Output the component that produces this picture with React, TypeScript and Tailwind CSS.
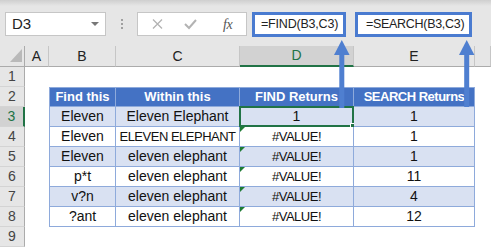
import React from "react";

type Cell = { text: string; error?: boolean; tight?: boolean };

// sheet column widths: row header, A, B, C, D, E, F
const colW = ["w-[25px]", "w-[24px]", "w-[67px]", "w-[124px]", "w-[114px]", "w-[121px]", "w-[16px]"];
const letters = ["A", "B", "C", "D", "E", "F"];

const header = ["Find this", "Within this", "FIND Returns", "SEARCH Returns"];

const val = { text: "#VALUE!", error: true, tight: true };

const rows: Cell[][] = [
  [{ text: "Eleven" }, { text: "Eleven Elephant" }, { text: "1" }, { text: "1" }],
  [{ text: "Eleven" }, { text: "ELEVEN ELEPHANT", tight: true }, val, { text: "1" }],
  [{ text: "Eleven" }, { text: "eleven elephant" }, val, { text: "1" }],
  [{ text: "p*t" }, { text: "eleven elephant" }, val, { text: "11" }],
  [{ text: "v?n" }, { text: "eleven elephant" }, val, { text: "4" }],
  [{ text: "?ant" }, { text: "eleven elephant" }, val, { text: "12" }],
];

const RowHead = ({ n, active }: { n: number; active?: boolean }) => (
  <div
    className={`${colW[0]} h-full shrink-0 flex items-center justify-center border-b border-[#d4d4d4] text-[14px] ${
      active
        ? "bg-[#d2d2d2] text-[#217346] border-r-2 border-r-[#217346]"
        : "bg-[#e6e6e6] text-[#444] border-r border-r-[#ababab]"
    }`}
  >
    {n}
  </div>
);

const FormulaBar = () => (
  <div className="h-[46px] bg-[linear-gradient(#cfcfcf,#e6e6e6_6px)] flex items-start pt-[12px] pl-[5px]">
    <div className="w-[101px] h-[24px] bg-white border border-[#c6c6c6] flex items-center justify-between pl-[6px] pr-[6px]">
      <span className="text-[15px] text-[#222]">D3</span>
      <span className="w-0 h-0 border-x-[4px] border-x-transparent border-t-[4px] border-t-[#777]" />
    </div>
    <div className="w-[31px] h-[24px] flex flex-col items-center justify-center gap-[2px]">
      <span className="w-[2px] h-[2px] bg-[#a0a0a0]" />
      <span className="w-[2px] h-[2px] bg-[#a0a0a0]" />
      <span className="w-[2px] h-[2px] bg-[#a0a0a0]" />
    </div>
    <div className="w-[110px] h-[24px] bg-white border border-[#c6c6c6] flex items-center">
      <svg width="80" height="22" viewBox="0 0 80 22" className="shrink-0">
        <path d="M15 6.5 L24 15.5 M24 6.5 L15 15.5" stroke="#b3b3b3" strokeWidth="1.3" fill="none" />
        <path d="M47 11 L51 15 L58 7" stroke="#b3b3b3" strokeWidth="2" fill="none" />
      </svg>
      <span className="ml-[5px] text-[14px] italic text-[#555] font-['Liberation_Serif'] tracking-[-0.5px]">fx</span>
    </div>
    <div className="ml-[5px] w-[94px] h-[25px] bg-white border-[3px] border-[#4a7bd0] flex items-center pl-[6px] text-[12.5px] tracking-[-0.2px] text-[#222] whitespace-nowrap">
      =FIND(B3,C3)
    </div>
    <div className="ml-[9px] w-[117px] h-[25px] bg-white border-[3px] border-[#4a7bd0] flex items-center pl-[8px] text-[12.5px] tracking-[-0.3px] text-[#222] whitespace-nowrap">
      =SEARCH(B3,C3)
    </div>
  </div>
);

const ColumnHeads = () => (
  <div className="h-[21px] flex bg-[#e6e6e6]">
    <div className={`${colW[0]} shrink-0 border-r border-b border-[#ababab] relative`}>
      <span className="absolute left-[10px] bottom-[4px] w-0 h-0 border-l-[12px] border-l-transparent border-b-[13px] border-b-[#b9b9b9]" />
    </div>
    {letters.map((l, i) => {
      const active = l === "D";
      return (
        <div
          key={l}
          className={`${colW[i + 1]} shrink-0 flex items-center justify-center text-[14px] border-r border-r-[#c6c6c6] ${
            active
              ? "bg-[#d2d2d2] text-[#217346] border-b-2 border-b-[#217346]"
              : "text-[#222] border-b border-b-[#ababab]"
          }`}
        >
          {l === "F" ? "" : l}
        </div>
      );
    })}
  </div>
);

const EmptyRow = ({ n }: { n: number }) => (
  <div className="h-[20px] flex">
    <RowHead n={n} />
    <div className="flex-1 bg-white" />
  </div>
);

export default function App() {
  return (
    <div className="w-[491px] h-[247px] overflow-hidden relative bg-white font-['Liberation_Sans',Arial,sans-serif]">
      <FormulaBar />
      <ColumnHeads />
      <EmptyRow n={1} />

      {/* table header */}
      <div className="h-[20px] flex">
        <RowHead n={2} />
        <div className={`${colW[1]} shrink-0`} />
        {header.map((h, i) => (
          <div
            key={h}
            className={`${colW[i + 2]} shrink-0 bg-[#4472c4] text-white font-bold text-[13px] whitespace-nowrap flex items-center justify-center border-t border-b border-r border-[#8eaadb] ${
              i === 0 ? "border-l" : ""
            } ${i === 3 ? "tracking-[-0.5px]" : ""}`}
          >
            {h}
          </div>
        ))}
      </div>

      {rows.map((r, ri) => {
        const n = ri + 3;
        const banded = ri % 2 === 0;
        return (
          <div key={n} className="h-[20px] flex">
            <RowHead n={n} active={n === 3} />
            <div className={`${colW[1]} shrink-0`} />
            {r.map((c, ci) => (
              <div
                key={ci}
                className={`${colW[ci + 2]} shrink-0 relative flex items-center justify-center whitespace-nowrap text-[#111] border-b border-r border-[#8eaadb] ${
                  ci === 0 ? "border-l" : ""
                } ${banded ? "bg-[#d9e1f2]" : "bg-white"} ${
                  c.tight ? "text-[13px] tracking-[-0.5px]" : "text-[14px]"
                }`}
              >
                {c.error && (
                  <span className="absolute left-0 top-0 w-0 h-0 border-r-[5px] border-r-transparent border-t-[5px] border-t-[#1e7b34]" />
                )}
                {c.text}
                {n === 3 && ci === 2 && (
                  <span className="absolute -left-px -top-px -right-px -bottom-px border-2 border-[#217346]">
                    <span className="absolute -right-[4px] -bottom-[4px] w-[6px] h-[6px] bg-[#217346] border border-white" />
                  </span>
                )}
              </div>
            ))}
          </div>
        );
      })}

      <EmptyRow n={9} />

      {/* arrows from the result cells up to their formulas */}
      <svg className="absolute inset-0 pointer-events-none" width="491" height="247" viewBox="0 0 491 247">
        <g fill="#4f7fd0">
          <rect x="339.3" y="53" width="5" height="55" />
          <polygon points="341.8,40 334,55 349.6,55" />
          <rect x="464.2" y="53" width="5" height="54" />
          <polygon points="466.7,40 459,55 474.4,55" />
        </g>
      </svg>
    </div>
  );
}
